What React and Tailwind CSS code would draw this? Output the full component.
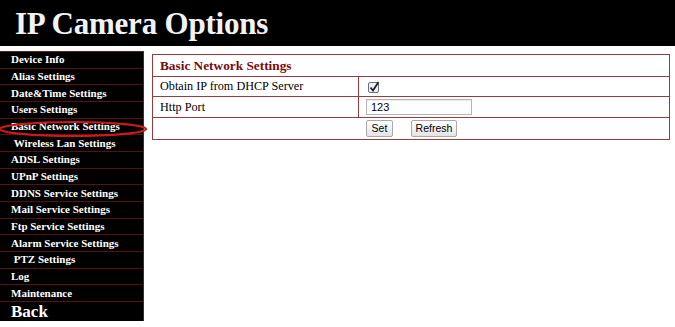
const MENU = [
  "Device Info",
  "Alias Settings",
  "Date&Time Settings",
  "Users Settings",
  "Basic Network Settings",
  "\u00a0Wireless Lan Settings",
  "ADSL Settings",
  "UPnP Settings",
  "DDNS Service Settings",
  "Mail Service Settings",
  "Ftp Service Settings",
  "Alarm Service Settings",
  "\u00a0PTZ Settings",
  "Log",
  "Maintenance",
];

export default function App() {
  return (
    <div className="w-[675px] h-[327px] bg-white font-['Liberation_Serif',serif] overflow-hidden">
      <div className="h-[46px] bg-black pl-[15px] flex items-center">
        <h1 className="text-[31px] font-bold text-[#f2f2f2] leading-none tracking-[-0.2px]">
          IP Camera Options
        </h1>
      </div>

      <div className="flex items-start mt-[5px]">
        <div className="relative w-[144px] bg-black border-r border-t border-[#6b1a1a]">
          {MENU.map((item) => (
            <div
              key={item}
              className="h-[16.67px] border-b border-[#5a1010] pl-[11px] flex items-center text-[11px] font-bold text-white leading-none whitespace-pre"
            >
              {item}
            </div>
          ))}
          <div className="h-[19px] pl-[11px] flex items-center text-[17px] font-bold text-white leading-none">
            Back
          </div>
          <svg
            className="absolute left-[-2px] top-[68px] pointer-events-none"
            width="150"
            height="18"
            viewBox="0 0 150 18"
          >
            <ellipse cx="75" cy="9" rx="73" ry="7" fill="none" stroke="#d01818" strokeWidth="2.2" />
          </svg>
        </div>

        <div className="ml-[8px] mt-[3px] w-[518px] border border-[#9a3b3b]">
          <div className="h-[22px] border-b border-[#9a3b3b] pl-[7px] flex items-center text-[13.3px] font-bold text-[#7a0a0a]">
            Basic Network Settings
          </div>
          <div className="flex h-[20px] border-b border-[#9a3b3b]">
            <div className="w-[206px] border-r border-[#9a3b3b] pl-[7px] flex items-center text-[12.2px] text-black">
              Obtain IP from DHCP Server
            </div>
            <div className="flex-1 pl-[9px] flex items-center">
              <svg width="12" height="12" viewBox="0 0 12 12">
                <rect x="0.5" y="1.5" width="10" height="10" rx="1.5" fill="#eef0f4" stroke="#6a6f7a" />
                <path d="M2.5 6.5 L5 9.5 L10.5 1" fill="none" stroke="#222" strokeWidth="1.8" />
              </svg>
            </div>
          </div>
          <div className="flex h-[21px] border-b border-[#9a3b3b]">
            <div className="w-[206px] border-r border-[#9a3b3b] pl-[7px] flex items-center text-[12.2px] text-black">
              Http Port
            </div>
            <div className="flex-1 pl-[7px] flex items-center">
              <div className="w-[106px] h-[16px] border border-[#b5b5b5] bg-white pl-[4px] flex items-center text-[11px] font-['Liberation_Sans',sans-serif] text-black shadow-[inset_0_1px_1px_rgba(0,0,0,0.08)]">
                123
              </div>
            </div>
          </div>
          <div className="h-[21px] flex items-center justify-center gap-[18px] pl-[1px]">
            <button className="h-[17px] w-[27px] border border-[#a9a9a9] rounded-[2px] bg-gradient-to-b from-white to-[#e4e4e4] text-[10.5px] font-['Liberation_Sans',sans-serif] text-black leading-none">
              Set
            </button>
            <button className="h-[17px] w-[46px] border border-[#a9a9a9] rounded-[2px] bg-gradient-to-b from-white to-[#e4e4e4] text-[10.5px] font-['Liberation_Sans',sans-serif] text-black leading-none">
              Refresh
            </button>
          </div>
        </div>
      </div>
    </div>
  );
}
